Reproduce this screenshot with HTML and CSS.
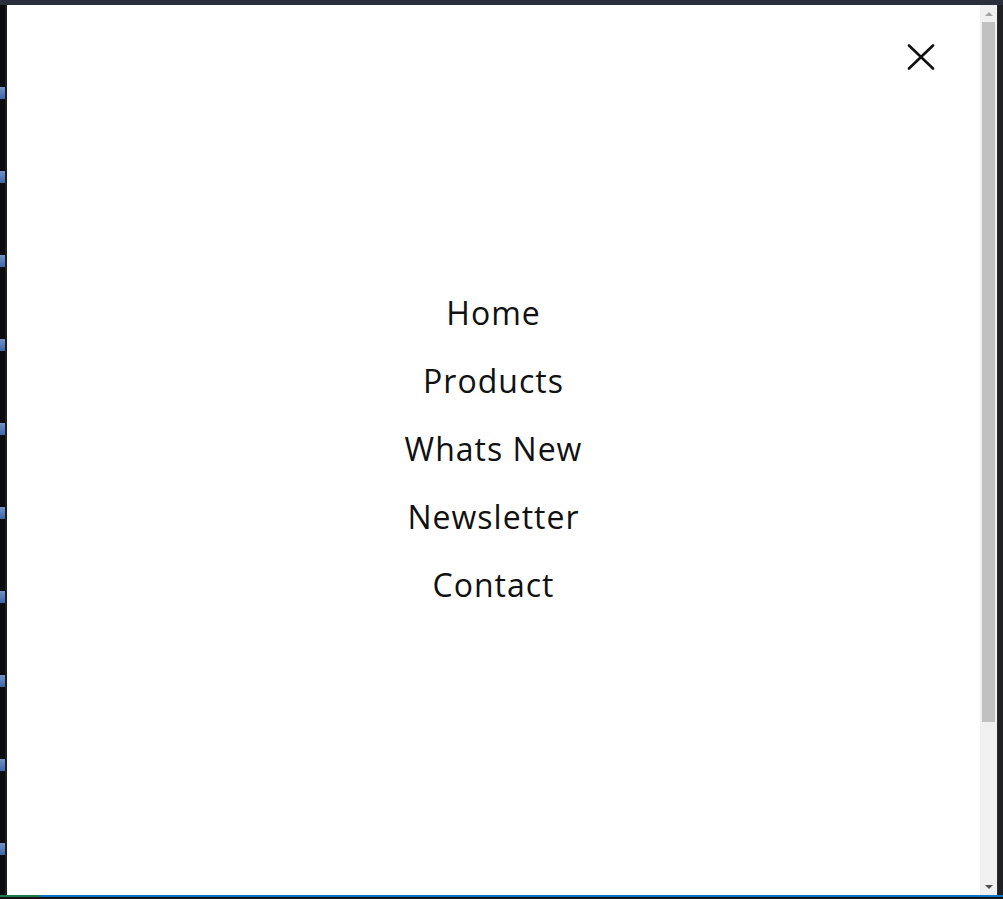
FILE: index.html
```html
<!DOCTYPE html>
<html lang="en">
<head>
<meta charset="utf-8">
<title>Menu</title>
<link rel="stylesheet" href="styles.css">
</head>
<body>
<div class="screen">
  <div class="titlebar"></div>
  <div class="middle">
    <div class="desk">
      <span class="dicon"></span><span class="dicon"></span><span class="dicon"></span><span class="dicon"></span><span class="dicon"></span>
      <span class="dicon"></span><span class="dicon"></span><span class="dicon"></span><span class="dicon"></span><span class="dicon"></span>
    </div>
    <main class="page">
      <button class="close" aria-label="Close">
        <svg width="28" height="26" viewBox="0 0 28 26" fill="none" stroke="#111" stroke-width="2.6" stroke-linecap="round">
          <path d="M2 1.5 L26 24.5 M26 1.5 L2 24.5"/>
        </svg>
      </button>
      <nav class="menu">
        <a href="#">Home</a>
        <a href="#">Products</a>
        <a href="#">Whats New</a>
        <a href="#">Newsletter</a>
        <a href="#">Contact</a>
      </nav>
    </main>
    <div class="scrollbar">
      <div class="arrow up"></div>
      <div class="track"><div class="thumb"></div></div>
      <div class="arrow down"></div>
    </div>
    <div class="edge"></div>
  </div>
  <div class="bottombar"><span class="green"></span><span class="blue"></span></div>
  <div class="bottomdark"></div>
</div>
</body>
</html>
```
FILE: styles.css
```css
* { box-sizing: border-box; }
html, body { margin: 0; padding: 0; }
body { background: #111216; width: 1003px; height: 899px; overflow: hidden; }

.screen { display: flex; flex-direction: column; width: 1003px; height: 899px; }
.titlebar { height: 5px; background: #2b2e3c; flex: none; }
.middle { flex: 1; display: flex; min-height: 0; }

.desk {
  width: 7px; flex: none; background: #0c0c0e;
  display: flex; flex-direction: column; align-items: flex-start;
  padding-top: 82px; gap: 72px; border-right: 2px solid #1d1d20;
}
.dicon { display: block; width: 5px; height: 12px; background: linear-gradient(#6f93c9, #3d66a8); }

.page { flex: 1; position: relative; background: #fff; display: flex; align-items: center; justify-content: center; padding-bottom: 2px; }

.close {
  position: absolute; top: 39px; right: 45px;
  border: 0; background: transparent; padding: 0; cursor: pointer; line-height: 0;
}

.menu { display: flex; flex-direction: column; align-items: center; }
.menu a {
  font-family: "Open Sans", "Liberation Sans", sans-serif;
  font-size: 32px; line-height: 68px; color: #111; text-decoration: none;
  letter-spacing: 1px;
}

.scrollbar { width: 17px; flex: none; background: #f0f0f0; display: flex; flex-direction: column; }
.arrow { height: 17px; flex: none; display: flex; align-items: center; justify-content: center; }
.arrow.up::before {
  content: ""; border-left: 4px solid transparent; border-right: 4px solid transparent;
  border-bottom: 4px solid #a3a3a3;
}
.arrow.down::before {
  content: ""; border-left: 4px solid transparent; border-right: 4px solid transparent;
  border-top: 4px solid #505050;
}
.track { flex: 1; padding: 0 2px; }
.thumb { height: 700px; background: #c1c1c1; }

.edge { width: 6px; flex: none; background: #1f2024; border-left: 1px solid #2c2d31; }

.bottombar { height: 2px; flex: none; display: flex; background: #0a72c7; }
.bottombar .green { width: 40px; background: #1e7a4c; }
.bottombar .blue { flex: 1; background: #0a72c7; }
.bottomdark { height: 2px; flex: none; background: #141417; }
```
